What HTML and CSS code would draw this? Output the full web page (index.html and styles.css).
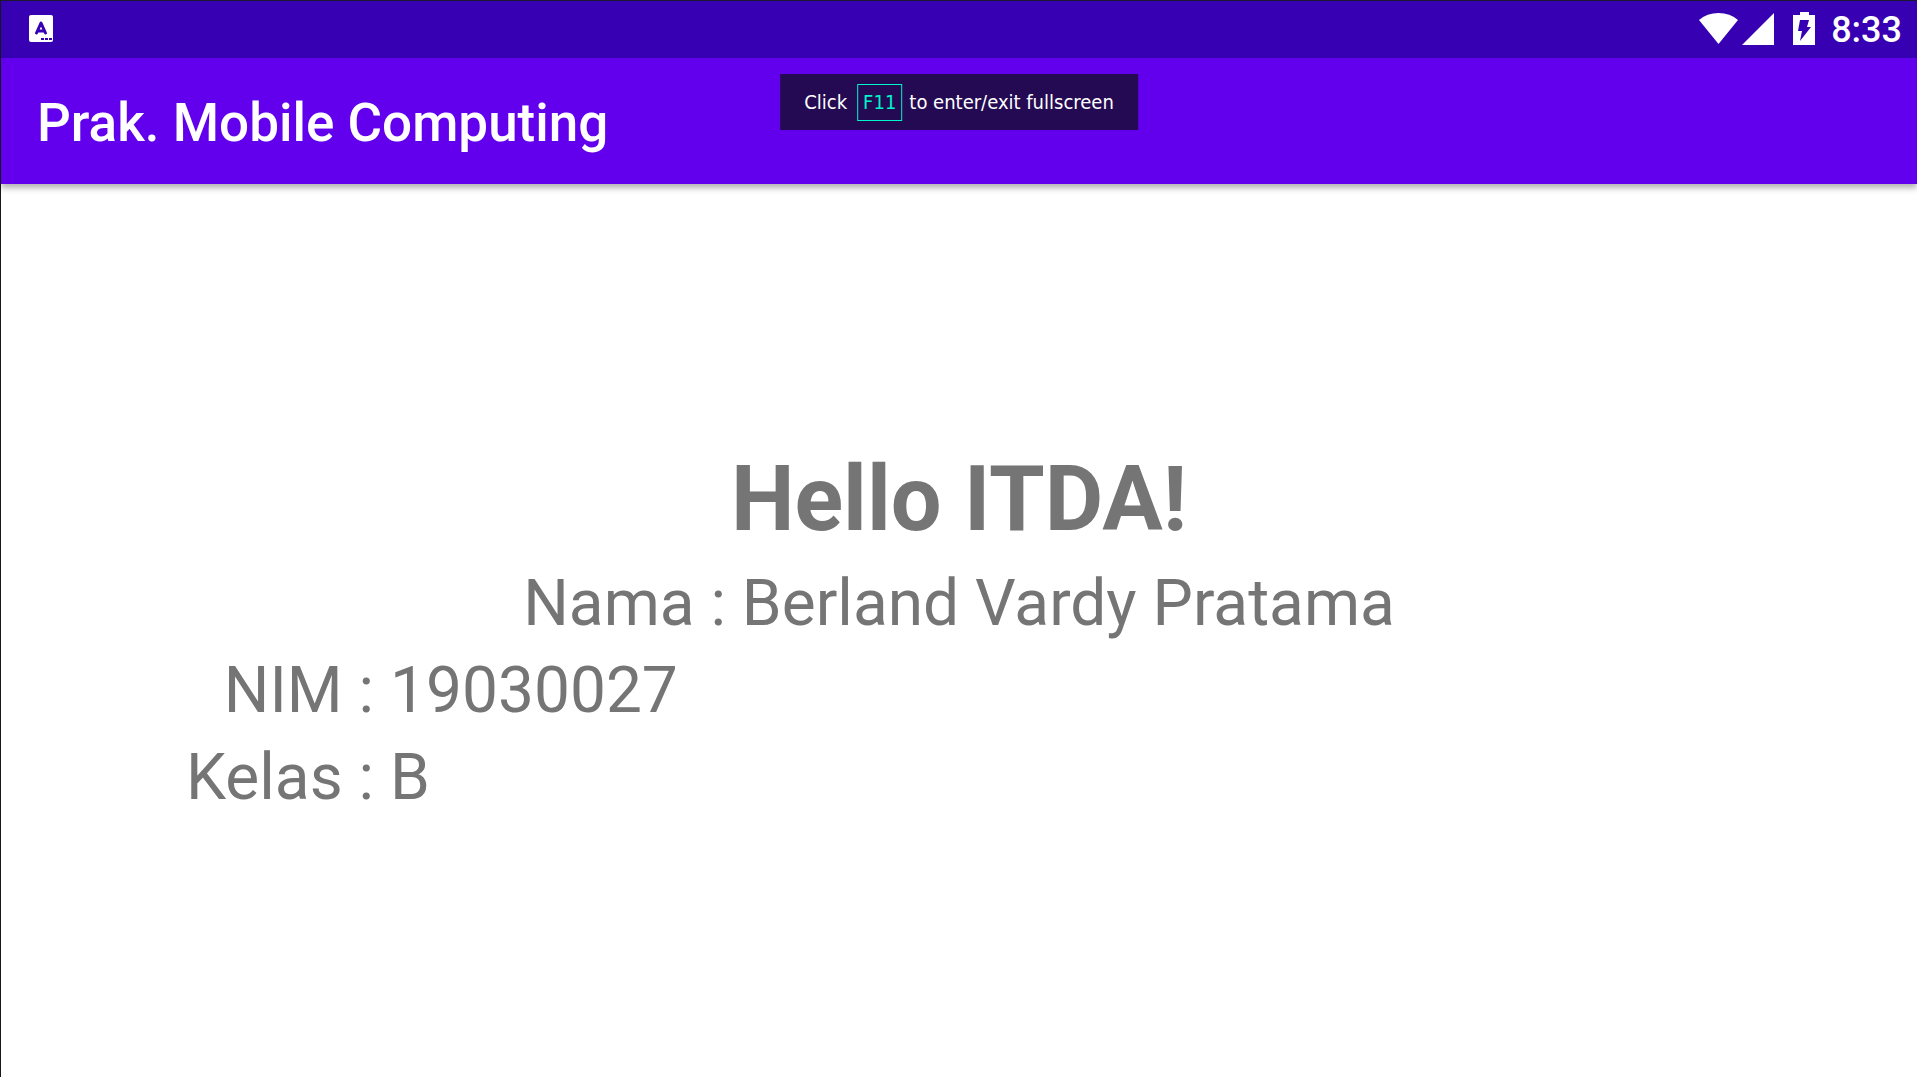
FILE: index.html
```html
<!DOCTYPE html>
<html lang="id">
<head>
<meta charset="utf-8">
<meta name="viewport" content="width=device-width, initial-scale=1">
<title>Prak. Mobile Computing</title>
<link rel="stylesheet" href="styles.css">
</head>
<body>
<div class="screen">
  <div class="status-bar">
    <svg class="notification" width="24" height="27" viewBox="0 0 24 27" aria-hidden="true">
      <rect width="24" height="27" rx="2" fill="#fff"/>
      <path d="M7.500 18 12 8 16.500 18M9 16h6" fill="none" stroke="#3700b3" stroke-width="3" stroke-linecap="round" stroke-linejoin="round"/>
      <path d="M12 23h3v2h-3zM16 23h3v2h-3zM20 23h3v2h-3z" fill="#3700b3"/>
    </svg>
    <div class="indicators">
      <svg class="wifi" width="39" height="31" viewBox="0 0 39 31" aria-hidden="true"><path d="M0 7Q8 0 19.500 0T39 7L19.500 31z" fill="#fff"/></svg>
      <svg class="signal" width="32" height="32" viewBox="0 0 32 32" aria-hidden="true"><path d="M32 0V32H0z" fill="#fff"/></svg>
      <svg class="battery" width="22" height="33" viewBox="0 0 22 33" aria-hidden="true"><path d="M7 0h9v3h6v30H0V3h7z" fill="#fff"/><path d="M7 8h9l-2 7h4L7 29l2-10H5z" fill="#3700b3"/></svg>
      <time class="clock">8:33</time>
    </div>
  </div>
  <header class="app-bar"><h1 class="app-title">Prak. Mobile Computing</h1></header>
  <main class="content">
    <h2 class="greeting">Hello ITDA!</h2>
    <p class="name">Nama : Berland Vardy Pratama</p>
    <dl class="details">
      <dt>NIM :</dt><dd>19030027</dd>
      <dt>Kelas :</dt><dd>B</dd>
    </dl>
  </main>
  <div class="hint"><span>Click</span><kbd class="key">F11</kbd><span>to enter/exit fullscreen</span></div>
</div>
</body>
</html>
```
FILE: styles.css
```css
* { box-sizing: border-box; }
body { margin: 0; background: #fff; font-family: Roboto, sans-serif; }
h1, h2, p, dl, dd { margin: 0; }
.screen {
  position: relative;
  display: flex;
  flex-direction: column;
  min-height: 100vh;
  border-top: 1px solid #1a1a2e;
  border-left: 1px solid #17171f;
}
.status-bar {
  display: flex;
  align-items: center;
  justify-content: space-between;
  height: 57px;
  padding: 0 15px 2px 28px;
  background: #3700b3;
}
.indicators { display: flex; align-items: center; }
.signal { margin-left: 4px; }
.battery { margin-left: 19px; }
.clock { margin-left: 16px; padding-top: 3px; color: #fff; font-size: 36px; font-weight: 500; line-height: 52px; }
.app-bar {
  display: flex;
  align-items: center;
  height: 126px;
  padding: 4px 36px 0;
  background: #6200ee;
  box-shadow: 0 4px 6px rgba(0, 0, 0, 0.3);
}
.app-title { color: #fff; font-size: 53px; font-weight: 500; line-height: 64px; }
.content {
  display: flex;
  flex: 1;
  flex-direction: column;
  justify-content: center;
  color: #757575;
  font-size: 64px;
  line-height: 87px;
}
.greeting { font-size: 90px; font-weight: 700; line-height: 120px; text-align: center; }
.name { text-align: center; }
.details {
  display: grid;
  grid-template-columns: max-content 1fr;
  column-gap: 16px;
  padding-left: 185px;
}
.details dt { text-align: right; }
.hint {
  position: absolute;
  top: 73px;
  left: 50%;
  display: flex;
  align-items: center;
  height: 56px;
  padding: 0 24px;
  background: #240a52;
  color: #fff;
  font-family: "DejaVu Sans Condensed", "Noto Sans", sans-serif;
  font-size: 20px;
  white-space: nowrap;
  transform: translateX(-50%);
}
.key {
  margin: 0 7px 0 10px;
  padding: 0 5px;
  border: 1px solid #00f5c8;
  color: #00f5c8;
  font: inherit;
  line-height: 35px;
}
```
